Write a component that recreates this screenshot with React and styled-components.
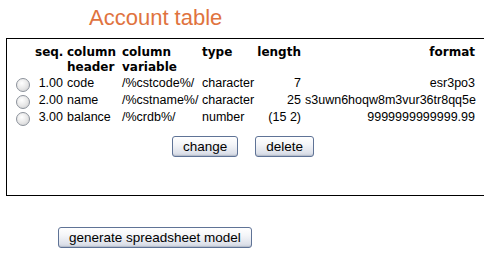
import React from "react";
import styled, { createGlobalStyle } from "styled-components";

const Global = createGlobalStyle`
  html, body { margin: 0; padding: 0; background: #fff; overflow: hidden; }
  body { font-family: "Liberation Sans", Arial, sans-serif; font-size: 13px; color: #000; }
`;

const Page = styled.div`
  width: 484px;
  height: 257px;
  overflow: hidden;
  display: flex;
  flex-direction: column;
`;

const Title = styled.h1`
  margin: 4px 0 0 89px;
  font-family: "Liberation Sans", Arial, sans-serif;
  font-weight: normal;
  font-size: 22px;
  line-height: 28px;
  color: #e0733e;
  height: 34px;
`;

const Panel = styled.div`
  margin-left: 6px;
  width: 520px;
  height: 158px;
  border: 1.5px solid #000;
  border-right: none;
  box-sizing: border-box;
  padding: 6px 0 0 8px;
`;

const Inner = styled.div`
  width: 462px;
  display: flex;
  flex-direction: column;
  align-items: center;
`;

const Table = styled.table`
  width: 462px;
  border-collapse: collapse;
  table-layout: fixed;
`;

const Th = styled.th`
  font-family: "DejaVu Sans", Verdana, sans-serif;
  font-weight: bold;
  font-size: 12px;
  line-height: 15px;
  padding: 0 2px;
  vertical-align: top;
  text-align: ${(p) => p.$align || "left"};
`;

const Td = styled.td`
  font-size: 12.5px;
  line-height: 17px;
  padding: 0 2px;
  white-space: nowrap;
  text-align: ${(p) => p.$align || "left"};
`;

const Radio = styled.span`
  display: block;
  width: 12px;
  height: 12px;
  margin: 2px 0 0 -1px;
  border-radius: 50%;
  border: 1px solid #8d939c;
  background: radial-gradient(circle at 40% 35%, #ffffff 0%, #e6e6e6 55%, #c8c9cc 100%);
`;

const ButtonRow = styled.div`
  display: flex;
  gap: 17px;
  margin: 10px 6px 0 0;
`;

const Button = styled.button`
  font-family: "Liberation Sans", Arial, sans-serif;
  font-size: 13.5px;
  color: #000;
  height: 21px;
  padding: 0 ${(p) => p.$pad || 10}px;
  border: 1px solid #5f7396;
  border-radius: 3px;
  background: linear-gradient(#ffffff 0%, #f4f5f8 40%, #dde1ea 85%, #c7cdd9 100%);
  box-shadow: inset 0 -1px 0 #b8bfcc;
  cursor: pointer;
`;

const Footer = styled.div`
  padding: 31px 0 0 58px;
`;

const rows = [
  ["1.00", "code", "/%cstcode%/", "character", "7", "esr3po3"],
  ["2.00", "name", "/%cstname%/", "character", "25", "s3uwn6hoqw8m3vur36tr8qq5e"],
  ["3.00", "balance", "/%crdb%/", "number", "(15 2)", "9999999999999.99"],
];

export default function App() {
  return (
    <Page>
      <Global />
      <Title>Account table</Title>
      <Panel>
        <Inner>
          <Table>
            <colgroup>
              <col style={{ width: 18 }} />
              <col style={{ width: 32 }} />
              <col style={{ width: 55 }} />
              <col style={{ width: 80 }} />
              <col style={{ width: 55 }} />
              <col style={{ width: 48 }} />
              <col />
            </colgroup>
            <thead>
              <tr>
                <Th></Th>
                <Th $align="right">seq.</Th>
                <Th>column header</Th>
                <Th>column variable</Th>
                <Th>type</Th>
                <Th $align="right">length</Th>
                <Th $align="right">format</Th>
              </tr>
            </thead>
            <tbody>
              {rows.map((r) => (
                <tr key={r[0]}>
                  <Td><Radio /></Td>
                  <Td $align="right">{r[0]}</Td>
                  <Td>{r[1]}</Td>
                  <Td>{r[2]}</Td>
                  <Td>{r[3]}</Td>
                  <Td $align="right">{r[4]}</Td>
                  <Td $align="right">{r[5]}</Td>
                </tr>
              ))}
            </tbody>
          </Table>
          <ButtonRow>
            <Button $pad={10}>change</Button>
            <Button $pad={10}>delete</Button>
          </ButtonRow>
        </Inner>
      </Panel>
      <Footer>
        <Button $pad={10}>generate spreadsheet model</Button>
      </Footer>
    </Page>
  );
}
